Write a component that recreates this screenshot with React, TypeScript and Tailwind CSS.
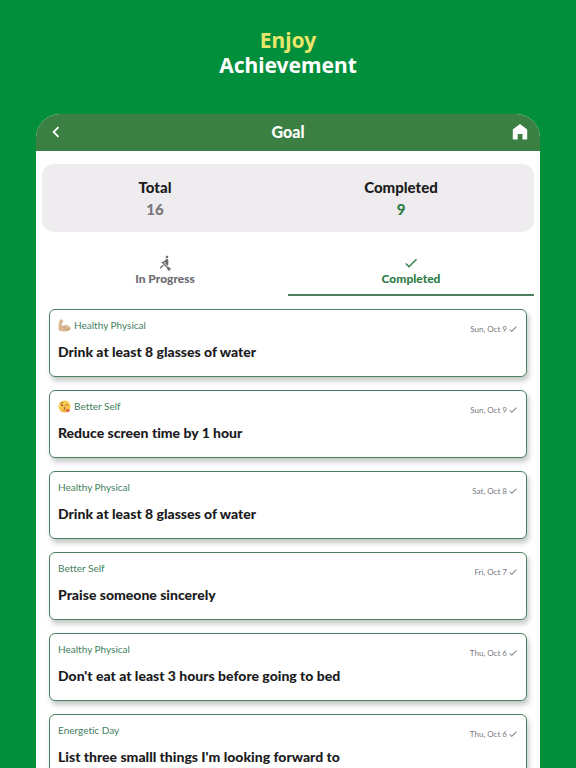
import { useState } from 'react';
import { MdCheck, MdChevronLeft, MdRowing } from 'react-icons/md';

type Goal = {
  id: number;
  category: string;
  name: string;
  date: string;
  icon?: 'arm' | 'kiss';
};

type Tab = 'progress' | 'completed';

const goals: Goal[] = [
  { id: 1, category: 'Healthy Physical', name: 'Drink at least 8 glasses of water', date: 'Sun, Oct 9', icon: 'arm' },
  { id: 2, category: 'Better Self', name: 'Reduce screen time by 1 hour', date: 'Sun, Oct 9', icon: 'kiss' },
  { id: 3, category: 'Healthy Physical', name: 'Drink at least 8 glasses of water', date: 'Sat, Oct 8' },
  { id: 4, category: 'Better Self', name: 'Praise someone sincerely', date: 'Fri, Oct 7' },
  { id: 5, category: 'Healthy Physical', name: "Don't eat at least 3 hours before going to bed", date: 'Thu, Oct 6' },
  { id: 6, category: 'Energetic Day', name: "List three smalll things I'm looking forward to", date: 'Thu, Oct 6' },
];

const HomeIcon = () => (
  <svg viewBox="0 0 16 16" className="h-4 w-4" fill="currentColor" aria-hidden="true">
    <path d="M8 0 15.2 5.6V15.500H10.500V10H5.700v5.500H.8V5.600Z" />
  </svg>
);

const ArmIcon = () => (
  <svg viewBox="0 0 24 24" className="h-[13px] w-[13px]" aria-hidden="true">
    <path
      d="M3.500 1.500C5.500.2 8.500.8 9.300 2.300c.5 1.100.1 2.600-.8 3.400l-1.700.6c-.3 2.600.6 5.300 2.200 7.500 2-2 4.600-3 7.400-2.400 4 .7 6.900 3.400 6.800 6.800-.2 3.500-4.200 4.900-9.300 4.900-5.300 0-10.500-.6-12-2.500C-.2 17.500 1.300 6.500 3.500 1.500Z"
      fill="#dcb995"
    />
    <path
      d="M4.500 5.500c1.200.9 2.300 1 3.500.5M9 13.800c.7 1.300 1.700 2.200 3.300 2.500M13.500 19c3.800 1.300 7.500.4 9-2"
      fill="none"
      stroke="#ab8a6c"
      strokeWidth="1.3"
      strokeLinecap="round"
    />
  </svg>
);

const KissIcon = () => (
  <svg viewBox="0 0 24 24" className="h-[13px] w-[13px]" aria-hidden="true">
    <circle cx="12" cy="12" r="11" fill="#fbc850" />
    <path d="M3 18a11 11 0 0 0 18 0c-5 3-13 3-18 0Z" fill="#f0a838" />
    <path
      d="M4.500 6.500c1-1.500 2.500-2 4-1.600M14 9.500c1.400-1.400 3.400-1.400 4.800 0M11 13c3 .2 3 2.300.4 2.500 3 .3 2.700 2.700-.6 2.700"
      fill="none"
      stroke="#8a5a24"
      strokeWidth="1.5"
      strokeLinecap="round"
    />
    <circle cx="7.5" cy="9.5" r="1.6" fill="#70451c" />
    <path d="M18.500 22.500c-3.500-1.700-4.600-3.600-3.500-5.200 1-1.400 2.700-.9 3.200.6 1-1.300 3-1.200 3.500.3.5 1.700-.9 3.400-3.200 4.300Z" fill="#e2563f" />
  </svg>
);

const GoalCard = ({ goal }: { goal: Goal }) => {
  return (
    <li className="flex h-[68px] shrink-0 justify-between rounded-md border border-[#4d8060] bg-white px-2 pt-[7px] shadow-[2px_4px_5px_rgba(60,80,70,0.3)]">
      <div className="flex flex-col gap-2.5">
        <p className="flex items-center gap-[3px] text-[10px] leading-4 text-[#3f8060]">
          {goal.icon === 'arm' && <ArmIcon />}
          {goal.icon === 'kiss' && <KissIcon />}
          {goal.category}
        </p>
        <h2 className="text-[14px] leading-[18px] font-black text-[#1c1c1e]">{goal.name}</h2>
      </div>
      <p className="flex h-6 items-center gap-px text-[8px] text-[#77777b]">
        {goal.date}
        <MdCheck className="h-2.5 w-2.5" />
      </p>
    </li>
  );
};

export default function App() {
  const [tab, setTab] = useState<Tab>('completed');

  return (
    <div className="flex h-screen flex-col overflow-hidden bg-[#028f3c] px-9 pt-7 font-['Lato',sans-serif] [font-variant-ligatures:none]">
      <h1 className="text-center font-['Noto_Sans',sans-serif] text-[21px] leading-[25px] font-bold text-white">
        <span className="text-[#e8e66a]">Enjoy</span>
        <br />
        Achievement
      </h1>

      <main className="mt-9 flex min-h-0 flex-1 flex-col overflow-hidden rounded-t-3xl bg-white">
        <header className="flex h-[37px] shrink-0 items-center justify-between bg-[#3b8042] px-3 pb-0.5 text-white">
          <button aria-label="Back" className="flex w-4 justify-center">
            <MdChevronLeft className="h-[22px] w-[22px] shrink-0" />
          </button>
          <p className="text-[16px] font-black">Goal</p>
          <a href="#home" aria-label="Home">
            <HomeIcon />
          </a>
        </header>

        <dl className="mx-1.5 mt-[13px] grid shrink-0 grid-cols-2 rounded-xl bg-[#eeecef] py-3 text-center text-[15px] leading-[22px] font-black">
          <div className="pr-5">
            <dt className="text-[#1c1c1e]">Total</dt>
            <dd className="text-[#77777b]">16</dd>
          </div>
          <div className="pr-5">
            <dt className="text-[#1c1c1e]">Completed</dt>
            <dd className="text-[#2f7d46]">9</dd>
          </div>
        </dl>

        <div role="tablist" className="mx-1.5 mt-5 grid shrink-0 grid-cols-2 text-[12px] leading-4 font-black">
          <button
            role="tab"
            aria-selected={tab === 'progress'}
            onClick={() => setTab('progress')}
            className="flex h-11 flex-col items-center border-b-2 border-transparent pt-[3px] text-[#6d6d70] aria-selected:border-[#4d8060] aria-selected:text-[#2f7d46]"
          >
            <MdRowing className="h-4 w-4" />
            In Progress
          </button>
          <button
            role="tab"
            aria-selected={tab === 'completed'}
            onClick={() => setTab('completed')}
            className="flex h-11 flex-col items-center border-b-2 border-transparent pt-[3px] text-[#6d6d70] aria-selected:border-[#4d8060] aria-selected:text-[#2f7d46]"
          >
            <MdCheck className="h-4 w-4" />
            Completed
          </button>
        </div>

        <ul className="flex min-h-0 flex-1 flex-col gap-[13px] overflow-hidden px-[13px] pt-[13px]">
          {goals.map((goal) => (
            <GoalCard key={goal.id} goal={goal} />
          ))}
        </ul>
      </main>
    </div>
  );
}
